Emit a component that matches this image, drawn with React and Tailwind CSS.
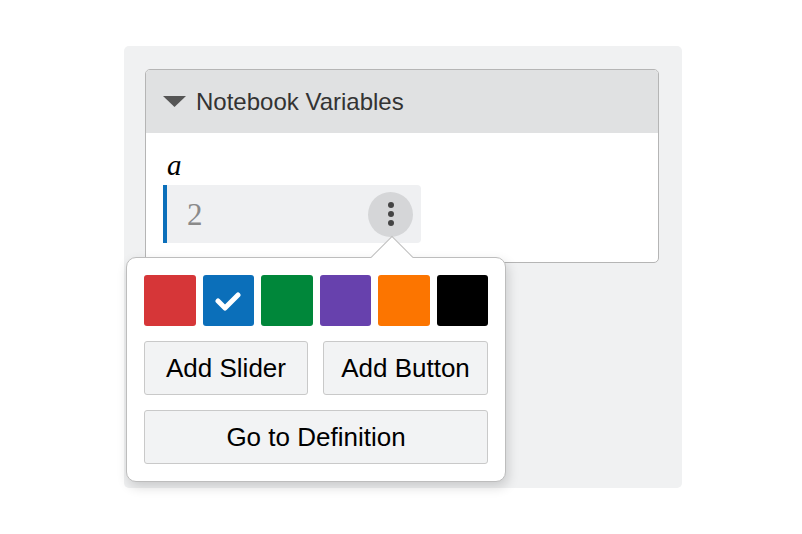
const swatches = [
  { color: "bg-[#d63638]", checked: false },
  { color: "bg-[#0b6fba]", checked: true },
  { color: "bg-[#00873a]", checked: false },
  { color: "bg-[#6741ad]", checked: false },
  { color: "bg-[#fc7500]", checked: false },
  { color: "bg-[#000000]", checked: false },
];

const sans = { fontFamily: '"Liberation Sans", Arial, sans-serif' };
const serif = { fontFamily: '"Liberation Serif", "Times New Roman", serif' };

export default function App() {
  return (
    <div className="w-[802px] h-[534px] bg-white pt-[46px] pl-[124px]" style={sans}>
      <div className="relative w-[558px] h-[442px] bg-[#f0f1f2] rounded-[5px] pt-[23px] pl-[21px]">
        {/* Notebook Variables card */}
        <div className="w-[514px] h-[194px] bg-white border border-[#b5b5b5] rounded-[5px] overflow-hidden">
          <div className="h-[63px] bg-[#e0e1e2] flex items-center pl-[17px] gap-[10px]">
            <svg width="23" height="11" viewBox="0 0 23 11">
              <polygon points="0,0 23,0 11.5,11" fill="#555" />
            </svg>
            <span className="text-[24px] text-[#333]">Notebook Variables</span>
          </div>
          <div className="pl-[17px] pt-[18px]">
            <div className="text-[29px] italic leading-[29px] text-black pl-[4px]" style={serif}>
              a
            </div>
            <div className="mt-[5px] w-[258px] h-[58px] bg-[#eff0f2] border-l-[4px] border-[#0b6fba] rounded-r-[4px] flex items-center justify-between pl-[20px] pr-[8px]">
              <span className="text-[31px] leading-none text-[#8a8a8a]" style={serif}>2</span>
              <div className="w-[45px] h-[45px] rounded-full bg-[#d5d6d8] flex flex-col items-center justify-center gap-[3px]">
                <span className="w-[6px] h-[6px] rounded-full bg-[#444]" />
                <span className="w-[6px] h-[6px] rounded-full bg-[#444]" />
                <span className="w-[6px] h-[6px] rounded-full bg-[#444]" />
              </div>
            </div>
          </div>
        </div>

        {/* Popover menu */}
        <div className="absolute left-[2px] top-[211px] w-[380px] h-[225px] bg-white border border-[#bdbdbd] rounded-[10px] shadow-[2px_5px_12px_rgba(0,0,0,0.16)] p-[17px]">
          <div className="absolute left-[250px] top-[-16px] w-[30px] h-[30px] bg-white border-t border-l border-[#bdbdbd] rotate-45" />
          <div className="relative grid grid-cols-6 gap-[7px]">
            {swatches.map((s, i) => (
              <div key={i} className={`h-[51px] rounded-[3px] flex items-center justify-center ${s.color}`}>
                {s.checked && (
                  <svg width="26" height="20" viewBox="0 0 26 20">
                    <path d="M3 10 L10 17 L23 4" stroke="white" strokeWidth="5" fill="none" strokeLinecap="round" strokeLinejoin="round" />
                  </svg>
                )}
              </div>
            ))}
          </div>
          <div className="relative flex gap-[15px] mt-[15px]">
            <button className="w-[164px] h-[54px] bg-[#f2f3f4] border border-[#c9c9c9] rounded-[3px] text-[26px] text-black">
              Add Slider
            </button>
            <button className="w-[165px] h-[54px] bg-[#f2f3f4] border border-[#c9c9c9] rounded-[3px] text-[26px] text-black">
              Add Button
            </button>
          </div>
          <button className="relative mt-[15px] w-[344px] h-[54px] bg-[#f2f3f4] border border-[#c9c9c9] rounded-[3px] text-[26px] text-black">
            Go to Definition
          </button>
        </div>
      </div>
    </div>
  );
}
